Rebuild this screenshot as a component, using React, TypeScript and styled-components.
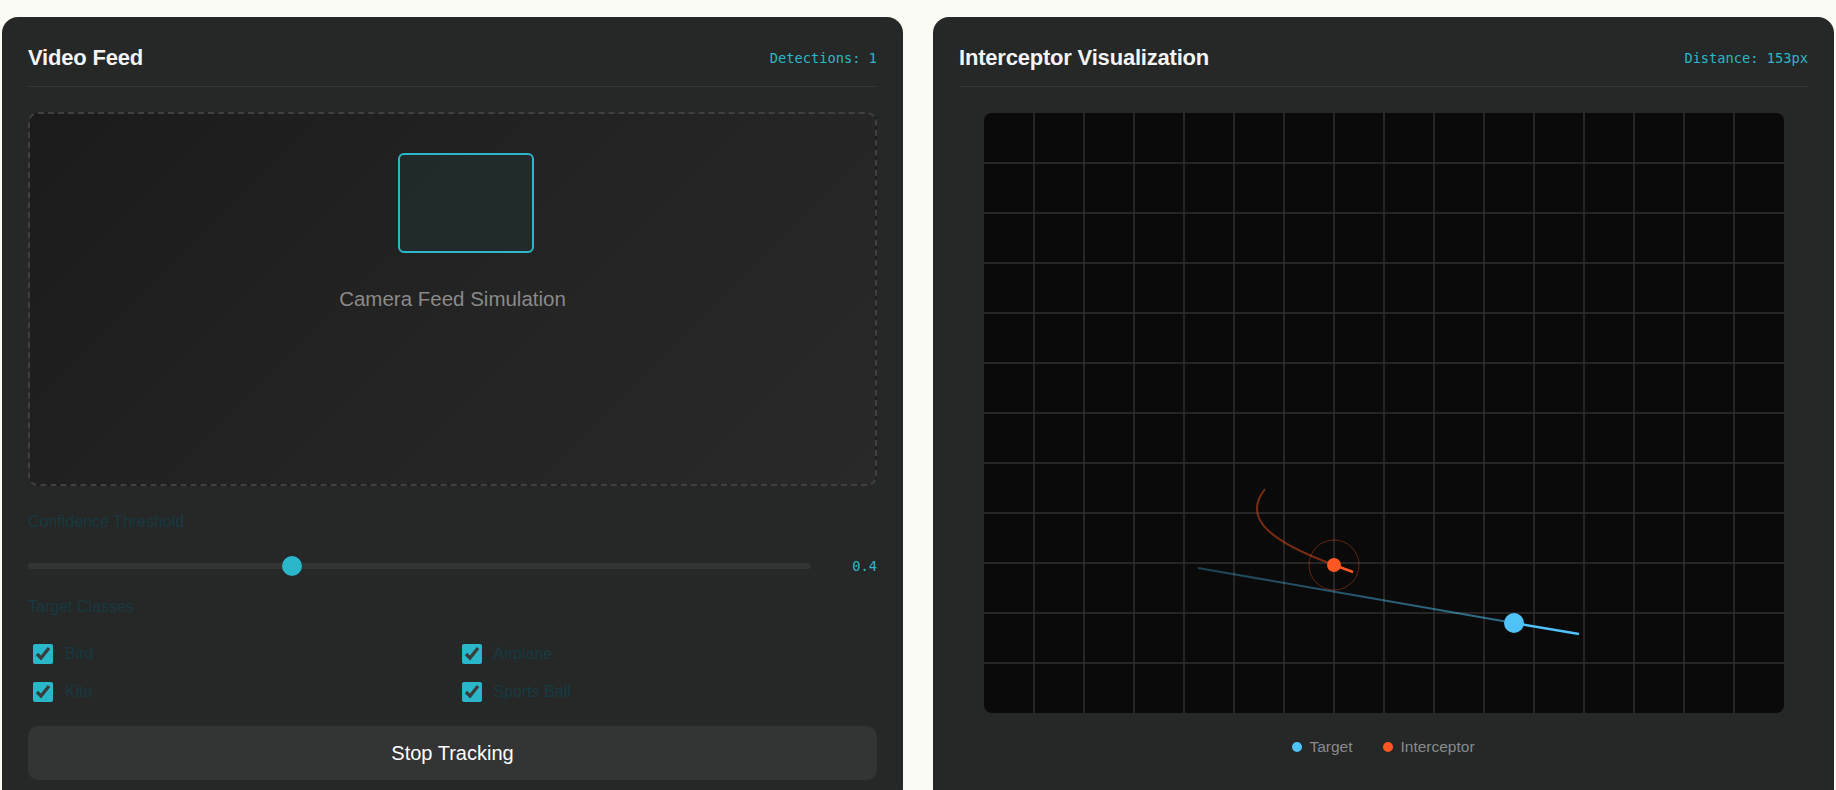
import styled, { createGlobalStyle } from "styled-components";

const TEAL = "#2ab7c9";
const BLUE = "#4fc3f7";
const ORANGE = "#ff5722";

const GlobalStyle = createGlobalStyle`
  html, body {
    margin: 0;
    padding: 0;
    background: #fbfbf6;
    font-family: "Liberation Sans", Arial, sans-serif;
  }
  * {
    box-sizing: border-box;
  }
`;

const TARGET_CLASSES = ["Bird", "Airplane", "Kite", "Sports Ball"];

const GRID_W = 800;
const GRID_H = 600;
const GRID_STEP = 50;

function InterceptorCanvas() {
  const cols = Array.from({ length: GRID_W / GRID_STEP - 1 }, (_, i) => (i + 1) * GRID_STEP);
  const rows = Array.from({ length: GRID_H / GRID_STEP - 1 }, (_, i) => (i + 1) * GRID_STEP);

  return (
    <Canvas viewBox={`0 0 ${GRID_W} ${GRID_H}`} width={GRID_W} height={GRID_H}>
      <defs>
        <linearGradient id="targetTrail" x1="214" y1="455" x2="530" y2="510" gradientUnits="userSpaceOnUse">
          <stop offset="0" stopColor={BLUE} stopOpacity="0.3" />
          <stop offset="1" stopColor={BLUE} stopOpacity="0.55" />
        </linearGradient>
      </defs>
      <rect width={GRID_W} height={GRID_H} fill="#0a0a0a" />
      {cols.map((x) => (
        <line key={`c${x}`} x1={x} y1={0} x2={x} y2={GRID_H} stroke="#303030" strokeWidth="1.5" />
      ))}
      {rows.map((y) => (
        <line key={`r${y}`} x1={0} y1={y} x2={GRID_W} y2={y} stroke="#303030" strokeWidth="1.5" />
      ))}

      {/* target trail + prediction */}
      <line x1="214" y1="455" x2="530" y2="510" stroke="url(#targetTrail)" strokeWidth="2" />
      <line x1="530" y1="510" x2="595" y2="521" stroke={BLUE} strokeWidth="2.5" />
      <circle cx="530" cy="510" r="10" fill={BLUE} />

      {/* interceptor trail */}
      <path
        d="M 281 376 C 258 405, 285 428, 350 452"
        fill="none"
        stroke={ORANGE}
        strokeOpacity="0.45"
        strokeWidth="2"
      />
      <circle cx="350" cy="452" r="25" fill="none" stroke={ORANGE} strokeOpacity="0.35" strokeWidth="1" />
      <line x1="350" y1="452" x2="369" y2="459" stroke={ORANGE} strokeWidth="2.5" />
      <circle cx="350" cy="452" r="7" fill={ORANGE} />
    </Canvas>
  );
}

export default function App() {
  return (
    <>
      <GlobalStyle />
      <Page>
        <Panel>
          <PanelHeader>
            <PanelTitle>Video Feed</PanelTitle>
            <Stat>Detections: 1</Stat>
          </PanelHeader>

          <FeedBox>
            <DetectionBox />
            <FeedText>Camera Feed Simulation</FeedText>
          </FeedBox>

          <FieldLabel>Confidence Threshold</FieldLabel>
          <SliderRow>
            <Slider type="range" min={0.1} max={1} step={0.05} defaultValue={0.4} />
            <SliderValue>0.4</SliderValue>
          </SliderRow>

          <FieldLabel>Target Classes</FieldLabel>
          <ClassGrid>
            {TARGET_CLASSES.map((name) => (
              <ClassOption key={name}>
                <Check type="checkbox" defaultChecked />
                {name}
              </ClassOption>
            ))}
          </ClassGrid>

          <ActionButton>Stop Tracking</ActionButton>
        </Panel>

        <Panel>
          <PanelHeader>
            <PanelTitle>Interceptor Visualization</PanelTitle>
            <Stat>Distance: 153px</Stat>
          </PanelHeader>

          <CanvasWrap>
            <InterceptorCanvas />
          </CanvasWrap>

          <Legend>
            <LegendItem>
              <Dot color={BLUE} />
              Target
            </LegendItem>
            <LegendItem>
              <Dot color={ORANGE} />
              Interceptor
            </LegendItem>
          </Legend>
        </Panel>
      </Page>
    </>
  );
}

const Page = styled.div`
  width: 100%;
  padding: 17px 2px 0;
  display: grid;
  grid-template-columns: 1fr 1fr;
  column-gap: 30px;
`;

const Panel = styled.section`
  background: #262727;
  border-radius: 16px;
  padding: 25px 26px 25px;
  display: flex;
  flex-direction: column;
`;

const PanelHeader = styled.div`
  display: flex;
  justify-content: space-between;
  align-items: center;
  height: 32px;
  box-sizing: content-box;
  padding-bottom: 12px;
  border-bottom: 1px solid #343535;
  margin-bottom: 25px;
`;

const PanelTitle = styled.h2`
  margin: 0;
  font-size: 22px;
  font-weight: 700;
  color: #f4f4f4;
  letter-spacing: -0.2px;
`;

const Stat = styled.span`
  font-family: "DejaVu Sans Mono", "Liberation Mono", monospace;
  font-size: 13.7px;
  color: ${TEAL};
`;

const FeedBox = styled.div`
  position: relative;
  height: 374px;
  border: 2px dashed #404040;
  border-radius: 10px;
  background: linear-gradient(135deg, #1b1b1b 0%, #242424 55%, #292929 100%);
  display: flex;
  align-items: center;
  justify-content: center;
  margin-bottom: 24px;
`;

const DetectionBox = styled.div`
  position: absolute;
  left: 368px;
  top: 39px;
  width: 136px;
  height: 100px;
  border: 2px solid ${TEAL};
  border-radius: 6px;
  background: rgba(42, 183, 201, 0.06);
`;

const FeedText = styled.span`
  font-size: 20.5px;
  color: #8a8a8a;
`;

const FieldLabel = styled.div`
  font-size: 16px;
  line-height: 24px;
  color: #173a41;
`;

const SliderRow = styled.div`
  display: flex;
  align-items: center;
  gap: 16px;
  height: 20px;
  margin: 22px 0 19px;
`;

const Slider = styled.input`
  flex: 1;
  margin: 0;
  height: 20px;
  appearance: none;
  -webkit-appearance: none;
  background: transparent;

  &::-webkit-slider-runnable-track {
    height: 6px;
    border-radius: 3px;
    background: #333434;
  }

  &::-webkit-slider-thumb {
    -webkit-appearance: none;
    width: 20px;
    height: 20px;
    margin-top: -7px;
    border-radius: 50%;
    background: ${TEAL};
    border: none;
  }
`;

const SliderValue = styled.span`
  width: 50px;
  text-align: right;
  font-family: "DejaVu Sans Mono", "Liberation Mono", monospace;
  font-size: 13.7px;
  color: ${TEAL};
`;

const ClassGrid = styled.div`
  display: grid;
  grid-template-columns: 1fr 1fr;
  column-gap: 8px;
  row-gap: 18px;
  margin: 25px 0 24px;
`;

const ClassOption = styled.label`
  display: flex;
  align-items: center;
  height: 20px;
  font-size: 16px;
  color: #173a41;
`;

const Check = styled.input`
  width: 20px;
  height: 20px;
  margin: 0 12px 0 5px;
  accent-color: ${TEAL};
`;

const ActionButton = styled.button`
  height: 54px;
  border: none;
  border-radius: 10px;
  background: #333434;
  color: #ffffff;
  font-family: "Liberation Sans", Arial, sans-serif;
  font-size: 20px;
  cursor: pointer;
`;

const CanvasWrap = styled.div`
  display: flex;
  justify-content: center;
  padding-top: 1px;
`;

const Canvas = styled.svg`
  display: block;
  border-radius: 8px;
`;

const Legend = styled.div`
  display: flex;
  justify-content: center;
  gap: 31px;
  margin-top: 24px;
  line-height: 20px;
`;

const LegendItem = styled.span`
  display: flex;
  align-items: center;
  gap: 7px;
  font-size: 15.5px;
  color: #8a8a8a;
`;

const Dot = styled.span<{ color: string }>`
  width: 10px;
  height: 10px;
  border-radius: 50%;
  background: ${(p) => p.color};
`;
